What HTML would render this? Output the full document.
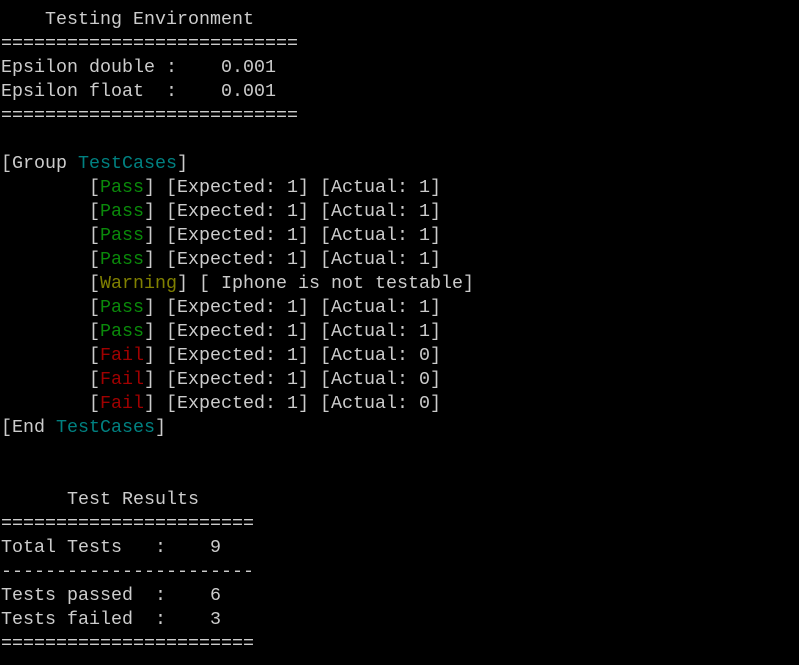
<!DOCTYPE html>
<html><head><meta charset="utf-8"><style>
html,body{margin:0;padding:0;background:#000;width:799px;height:665px;overflow:hidden}
pre{margin:0;padding:8px 0 0 1px;font-family:"Liberation Mono",monospace;font-size:18.33px;line-height:24px;color:#cccccc;white-space:pre}
.t{color:#008080}.g{color:#0a8a0a}.y{color:#808000}.r{color:#a00000}
</style></head><body><pre>    Testing Environment
===========================
Epsilon double :    0.001
Epsilon float  :    0.001
===========================

[Group <span class="t">TestCases</span>]
        [<span class="g">Pass</span>] [Expected: 1] [Actual: 1]
        [<span class="g">Pass</span>] [Expected: 1] [Actual: 1]
        [<span class="g">Pass</span>] [Expected: 1] [Actual: 1]
        [<span class="g">Pass</span>] [Expected: 1] [Actual: 1]
        [<span class="y">Warning</span>] [ Iphone is not testable]
        [<span class="g">Pass</span>] [Expected: 1] [Actual: 1]
        [<span class="g">Pass</span>] [Expected: 1] [Actual: 1]
        [<span class="r">Fail</span>] [Expected: 1] [Actual: 0]
        [<span class="r">Fail</span>] [Expected: 1] [Actual: 0]
        [<span class="r">Fail</span>] [Expected: 1] [Actual: 0]
[End <span class="t">TestCases</span>]


      Test Results
=======================
Total Tests   :    9
-----------------------
Tests passed  :    6
Tests failed  :    3
=======================
</pre></body></html>
